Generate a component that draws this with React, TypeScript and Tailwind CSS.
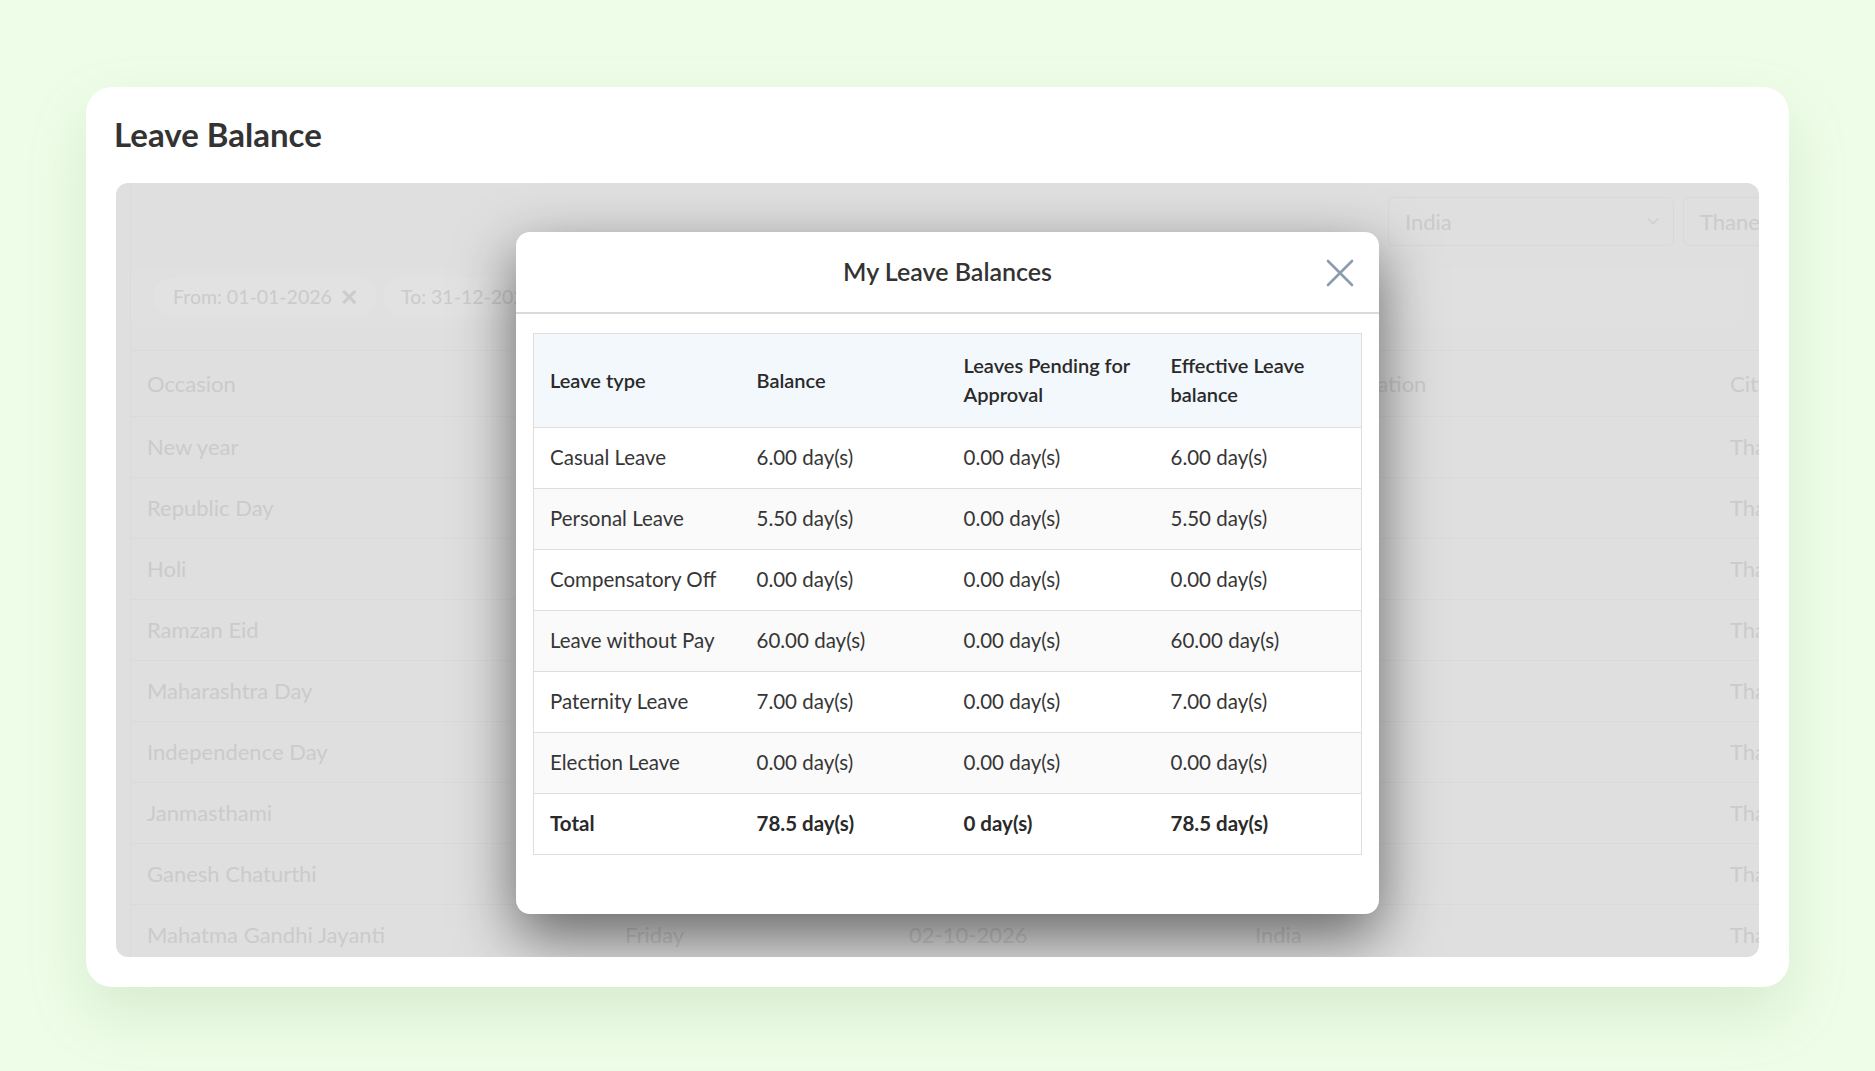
import React from "react";

const balances = [
  { type: "Casual Leave", balance: "6.00 day(s)", pending: "0.00 day(s)", effective: "6.00 day(s)" },
  { type: "Personal Leave", balance: "5.50 day(s)", pending: "0.00 day(s)", effective: "5.50 day(s)" },
  { type: "Compensatory Off", balance: "0.00 day(s)", pending: "0.00 day(s)", effective: "0.00 day(s)" },
  { type: "Leave without Pay", balance: "60.00 day(s)", pending: "0.00 day(s)", effective: "60.00 day(s)" },
  { type: "Paternity Leave", balance: "7.00 day(s)", pending: "0.00 day(s)", effective: "7.00 day(s)" },
  { type: "Election Leave", balance: "0.00 day(s)", pending: "0.00 day(s)", effective: "0.00 day(s)" },
];

const holidays = [
  { name: "New year", day: "Thursday", date: "01-01-2026" },
  { name: "Republic Day", day: "Monday", date: "26-01-2026" },
  { name: "Holi", day: "Wednesday", date: "04-03-2026" },
  { name: "Ramzan Eid", day: "Saturday", date: "21-03-2026" },
  { name: "Maharashtra Day", day: "Friday", date: "01-05-2026" },
  { name: "Independence Day", day: "Saturday", date: "15-08-2026" },
  { name: "Janmasthami", day: "Friday", date: "04-09-2026" },
  { name: "Ganesh Chaturthi", day: "Monday", date: "14-09-2026" },
  { name: "Mahatma Gandhi Jayanti", day: "Friday", date: "02-10-2026" },
];

function HolidayRow({ cells, header }: { cells: string[]; header?: boolean }) {
  return (
    <div className={`flex items-center border-b border-[#dadada] ${header ? "h-[66px]" : "h-[61px]"}`}>
      <div className="w-[478px] shrink-0 px-4 whitespace-nowrap">{cells[0]}</div>
      <div className="w-[284px] shrink-0 px-4">{cells[1]}</div>
      <div className="w-[346px] shrink-0 px-4">{cells[2]}</div>
      <div className={`w-[475px] shrink-0 pr-4 whitespace-nowrap ${header ? "pl-[26px]" : "pl-4"}`}>{cells[3]}</div>
      <div className="w-[200px] shrink-0 px-4">{cells[4]}</div>
    </div>
  );
}

function LeaveBalanceModal() {
  return (
    <div className="absolute left-[400px] top-[49px] w-[863px] rounded-[14px] bg-white shadow-[0_22px_60px_rgba(0,0,0,0.55)]">
      <div className="relative flex h-[82px] items-center justify-center border-b-2 border-[#dadada]">
        <h2 className="text-[25px] font-semibold text-[#333]">My Leave Balances</h2>
        <button className="absolute right-[25px] top-[27px] h-[28px] w-[28px] text-[#8d9cac]" aria-label="Close">
          <svg viewBox="0 0 28 28" width="28" height="28" fill="none" stroke="currentColor" strokeWidth="2.6" strokeLinecap="round">
            <path d="M2 2 L26 26 M26 2 L2 26" />
          </svg>
        </button>
      </div>
      <div className="px-[17px] pb-[59px] pt-[19px]">
        <table className="w-full table-fixed border-collapse border border-[#dedede] text-[20.5px] text-[#363636]">
          <thead>
            <tr className="h-[94px] bg-[#f3f8fc] text-left leading-[29px] text-[#2a2a2a]">
              <th className="px-4 text-[20px] font-semibold">Leave type</th>
              <th className="px-4 text-[20px] font-semibold">Balance</th>
              <th className="px-4 text-[20px] font-semibold">Leaves Pending for<br />Approval</th>
              <th className="px-4 text-[20px] font-semibold">Effective Leave<br />balance</th>
            </tr>
          </thead>
          <tbody>
            {balances.map((b, i) => (
              <tr key={b.type} className={`h-[61px] border-t border-[#dedede] ${i % 2 === 1 ? "bg-[#fafafa]" : "bg-white"}`}>
                <td className="px-4">{b.type}</td>
                <td className="px-4">{b.balance}</td>
                <td className="px-4">{b.pending}</td>
                <td className="px-4">{b.effective}</td>
              </tr>
            ))}
            <tr className="h-[61px] border-t border-[#dedede] font-bold text-[#2a2a2a]">
              <td className="px-4">Total</td>
              <td className="px-4">78.5 day(s)</td>
              <td className="px-4">0 day(s)</td>
              <td className="px-4">78.5 day(s)</td>
            </tr>
          </tbody>
        </table>
      </div>
    </div>
  );
}

export default function App() {
  return (
    <div className="min-h-screen bg-[#eefde8] px-[86px] pt-[87px] font-['Lato',sans-serif]">
      <div className="h-[900px] w-[1703px] rounded-[26px] bg-white px-[30px] pt-[28px] shadow-[0_26px_60px_rgba(110,160,100,0.18)]">
        <h1 className="-ml-[2px] text-[33px] font-bold leading-[1.2] text-[#333]">Leave Balance</h1>

        <div className="relative mt-[28px] h-[774px] overflow-hidden rounded-xl bg-[#dfdfdf] text-[22px] text-[#cbcbcb]">
          <div className="ml-[14px] h-full border-l border-[#dadada]">
            <div className="flex gap-[9px] pl-[1257px] pt-[14px]">
              <div className="flex h-[49px] w-[286px] shrink-0 items-center justify-between rounded-md border border-[#d8d8d8] pl-4 pr-[10px]">
                <span>India</span>
                <svg width="20" height="20" viewBox="0 0 24 24" fill="none" stroke="#cfcfcf" strokeWidth="2">
                  <path d="M6 9l6 6 6-6" />
                </svg>
              </div>
              <div className="flex h-[49px] w-[286px] shrink-0 items-center rounded-md border border-[#d8d8d8] pl-4">
                <span>Thane</span>
              </div>
            </div>

            <div className="mr-4 mt-[21px] flex h-[60px] items-center gap-[7px] rounded-lg bg-[#e0e0e0] pl-[23px] text-[19.5px]">
              <div className="flex h-[40px] w-[222px] items-center justify-between rounded-full bg-[#e2e2e2] pl-[19px] pr-[18px]">
                <span>From: 01-01-2026</span>
                <span className="text-[22px] font-bold">✕</span>
              </div>
              <div className="flex h-[40px] w-[222px] items-center justify-between rounded-full bg-[#e2e2e2] pl-[18px] pr-[18px]">
                <span>To: 31-12-2026</span>
                <span className="text-[22px] font-bold">✕</span>
              </div>
            </div>

            <div className="mt-[23px] border-t border-[#dadada]">
              <HolidayRow header cells={["Occasion", "Day", "Date", "Holiday Location", "City"]} />
              {holidays.map((h) => (
                <HolidayRow key={h.name} cells={[h.name, h.day, h.date, "India", "Thane"]} />
              ))}
            </div>
          </div>

          <LeaveBalanceModal />
        </div>
      </div>
    </div>
  );
}
